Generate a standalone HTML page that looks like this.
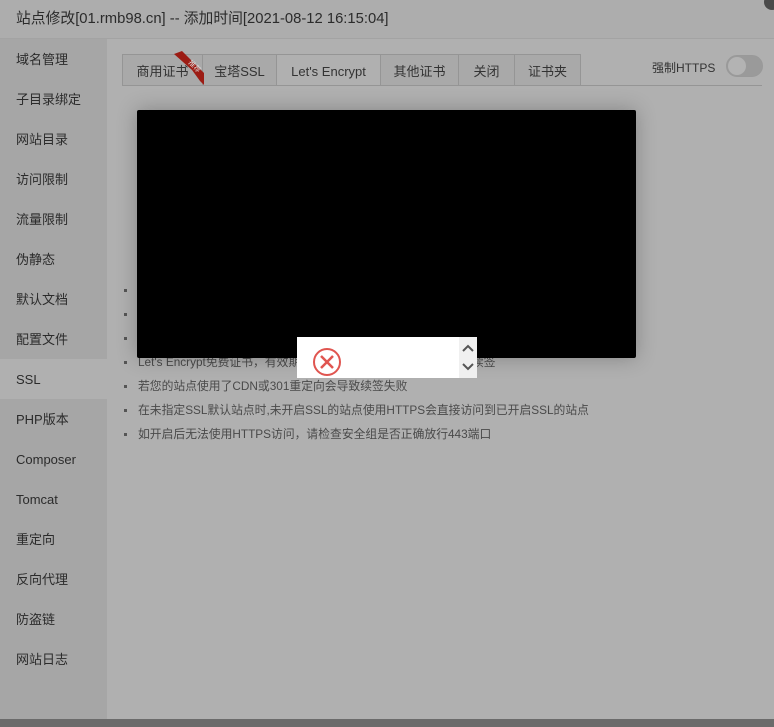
<!DOCTYPE html>
<html><head><meta charset="utf-8"><style>
body{margin:0;width:774px;height:727px;overflow:hidden;background:#b0b0b0;font-family:"Liberation Sans","Noto Sans CJK SC",sans-serif;position:relative}
.hd{position:absolute;left:0;top:0;width:774px;height:38px;background:#adadad;border-bottom:1px solid #a3a3a3;font-size:14.8px;color:#2b2b2b;line-height:38px;text-indent:16px}
.sb{position:absolute;left:0;top:39px;width:107px;height:680px;background:#a6a6a6}
.sb div{height:40px;line-height:42px;padding-left:16px;font-size:13px;color:#2b2b2b}
.sb .on{background:#b0b0b0}
.bar{position:absolute;left:0;top:719px;width:774px;height:8px;background:#6b6b6b}
.tabs{position:absolute;left:122px;top:54px;height:31px;border-bottom:1px solid #959595;width:640px}
.tab{position:absolute;top:0;height:30px;border:1px solid #959595;border-bottom:none;line-height:34px;text-align:center;font-size:13px;color:#333;background:#a9a9a9;box-sizing:content-box}
.tab.on{background:#b0b0b0}
ul{position:absolute;left:122px;top:278px;margin:0;padding:0;list-style:none;font-size:11.8px;color:#4a4a4a}
li{height:24px;line-height:24px;padding-left:16px;position:relative}
li:before{content:"";position:absolute;left:2px;top:11px;width:3px;height:3px;background:#555}
</style></head><body>
<div class="hd">站点修改[01.rmb98.cn] -- 添加时间[2021-08-12 16:15:04]</div>
<div style="position:absolute;left:764px;top:-6px;width:16px;height:16px;border-radius:50%;background:#4a4a4a"></div>
<div class="sb">
<div>域名管理</div><div>子目录绑定</div><div>网站目录</div><div>访问限制</div><div>流量限制</div><div>伪静态</div><div>默认文档</div><div>配置文件</div><div class="on">SSL</div><div>PHP版本</div><div>Composer</div><div>Tomcat</div><div>重定向</div><div>反向代理</div><div>防盗链</div><div>网站日志</div>
</div>
<div class="tabs">
<div class="tab" style="left:0;width:79px">商用证书</div>
<div class="tab" style="left:80px;width:73px">宝塔SSL</div>
<div class="tab on" style="left:154px;width:103px">Let's Encrypt</div>
<div class="tab" style="left:258px;width:77px">其他证书</div>
<div class="tab" style="left:336px;width:55px">关闭</div>
<div class="tab" style="left:392px;width:65px">证书夹</div>
</div>
<svg style="position:absolute;left:172px;top:51px" width="34" height="34"><path d="M2 3 L10 0 L32 22 L32 34 L28 30 L20 19 Z" fill="#9c1c14"/><text x="16" y="12" font-size="7" fill="#ddd" transform="rotate(45 16 12)" font-family="Noto Sans CJK SC">推荐</text></svg>
<div style="position:absolute;left:652px;top:59px;font-size:12px;color:#333">强制HTTPS</div>
<div style="position:absolute;left:726px;top:55px;width:35px;height:20px;border-radius:11px;background:#9a9a9a;border:1px solid #999"><div style="position:absolute;left:1px;top:1px;width:18px;height:18px;border-radius:50%;background:#b3b3b3"></div></div>
<ul>
<li></li><li></li><li></li>
<li>Let's Encrypt免费证书，有效期3个月，支持多域名。默认会自动续签</li>
<li>若您的站点使用了CDN或301重定向会导致续签失败</li>
<li>在未指定SSL默认站点时,未开启SSL的站点使用HTTPS会直接访问到已开启SSL的站点</li>
<li>如开启后无法使用HTTPS访问，请检查安全组是否正确放行443端口</li>
</ul>
<div style="position:absolute;left:137px;top:110px;width:499px;height:248px;background:#000;border-radius:2px;box-shadow:0 0 20px rgba(0,0,0,.25)"></div>
<div style="position:absolute;left:297px;top:337px;width:180px;height:41px;background:#fff">
<div style="position:absolute;right:0;top:0;width:18px;height:41px;background:#f0f0f0"></div>
<svg style="position:absolute;left:162px;top:0" width="18" height="41"><path d="M4 14 L9 9 L14 14 M4 27 L9 32 L14 27" stroke="#555" stroke-width="2" fill="none"/></svg>
<svg style="position:absolute;left:15px;top:10px" width="30" height="30"><circle cx="15" cy="15" r="13" stroke="#e05550" stroke-width="2" fill="none"/><path d="M9 9 L21 21 M21 9 L9 21" stroke="#e05550" stroke-width="2.5"/></svg>
</div>
<div class="bar"></div>
</body></html>
